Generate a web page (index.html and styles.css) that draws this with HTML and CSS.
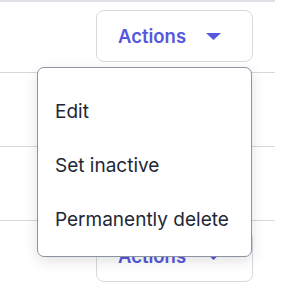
FILE: index.html
```html
<!DOCTYPE html>
<html lang="en">
<head>
    <meta charset="UTF-8">
    <meta name="viewport" content="width=device-width, initial-scale=1.0">
    <title>Actions menu</title>
    <link rel="stylesheet" href="styles.css">
</head>
<body>
    <div class="table">
        <div class="row">
            <button class="actions">
                <span>Actions</span>
                <svg class="caret" width="15" height="7" viewBox="0 0 15 7"><path d="M0 0H15L7.5 7Z" fill="currentColor"/></svg>
            </button>
        </div>
        <div class="row"></div>
        <div class="row"></div>
        <div class="row">
            <button class="actions">
                <span>Actions</span>
                <svg class="caret" width="15" height="7" viewBox="0 0 15 7"><path d="M0 0H15L7.5 7Z" fill="currentColor"/></svg>
            </button>
        </div>

        <ul class="menu">
            <li class="menu-item">Edit</li>
            <li class="menu-item">Set inactive</li>
            <li class="menu-item">Permanently delete</li>
        </ul>
    </div>
</body>
</html>
```

FILE: styles.css
```css
html {
  font-family: Inter, "Noto Sans", sans-serif;
}

body {
  margin: 0;
  background-color: #fff;
}

.table {
  position: relative;
  width: 275px;
}

.row {
  box-sizing: border-box;
  height: 74px;
  padding: 9px 22px 0 0;
  display: flex;
  justify-content: flex-end;
  align-items: flex-start;
  border-bottom: 1px solid #d3d8df;
}

.row:first-child {
  height: 73px;
  padding-top: 8px;
  border-top: 2px solid #dde1e7;
}

.actions {
  box-sizing: border-box;
  width: 157px;
  height: 52px;
  display: flex;
  align-items: center;
  gap: 20px;
  padding: 0 0 0 21px;
  background-color: #fff;
  border: 1px solid #d5d9e0;
  border-radius: 8px;
  color: #5558de;
  font-family: inherit;
  font-size: 18.5px;
  font-weight: 600;
}

.caret {
  margin-top: 1px;
}

.menu {
  position: absolute;
  left: 37px;
  top: 67px;
  box-sizing: border-box;
  width: 215px;
  height: 190px;
  margin: 0;
  padding: 17px 0 9px;
  list-style: none;
  background-color: #fff;
  border: 1px solid #8b93a3;
  border-radius: 7px;
  box-shadow: 0 4px 14px rgba(0, 0, 0, 0.12);
}

.menu-item {
  padding: 15px 17px;
  line-height: 24px;
  font-size: 19px;
  color: #222735;
}
```
